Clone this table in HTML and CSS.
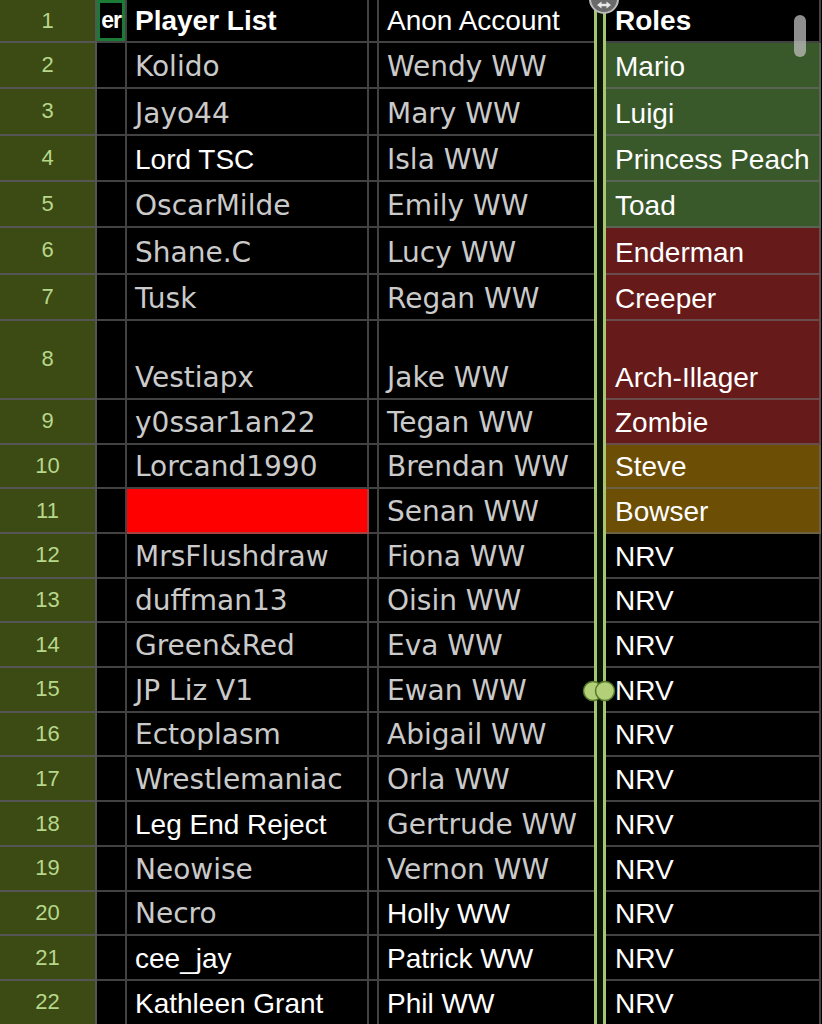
FILE: index.html
```html
<!DOCTYPE html>
<html>
<head>
<meta charset="utf-8">
<link rel="stylesheet" href="styles.css">
</head>
<body>
<div class="sheet">
  <div class="row r1">
    <div class="rh">1</div>
    <div class="c sel"><span>er</span></div>
    <div class="c w bold">Player List</div>
    <div class="c"></div>
    <div class="c w">Anon Account</div>
    <div class="div top"><span></span></div>
    <div class="c w bold">Roles</div>
  </div>
  <div class="row ra"><div class="rh">2</div><div class="c"></div><div class="c v">Kolido</div><div class="c"></div><div class="c v">Wendy WW</div><div class="div"></div><div class="c w g">Mario</div></div>
  <div class="row ra"><div class="rh">3</div><div class="c"></div><div class="c v">Jayo44</div><div class="c"></div><div class="c v">Mary WW</div><div class="div"></div><div class="c w g">Luigi</div></div>
  <div class="row ra"><div class="rh">4</div><div class="c"></div><div class="c w">Lord TSC</div><div class="c"></div><div class="c v">Isla WW</div><div class="div"></div><div class="c w g">Princess Peach</div></div>
  <div class="row ra"><div class="rh">5</div><div class="c"></div><div class="c v">OscarMilde</div><div class="c"></div><div class="c v">Emily WW</div><div class="div"></div><div class="c w g">Toad</div></div>
  <div class="row ra"><div class="rh">6</div><div class="c"></div><div class="c v">Shane.C</div><div class="c"></div><div class="c v">Lucy WW</div><div class="div"></div><div class="c w r">Enderman</div></div>
  <div class="row ra"><div class="rh">7</div><div class="c"></div><div class="c v">Tusk</div><div class="c"></div><div class="c v">Regan WW</div><div class="div"></div><div class="c w r">Creeper</div></div>
  <div class="row rt"><div class="rh">8</div><div class="c"></div><div class="c v">Vestiapx</div><div class="c"></div><div class="c v">Jake WW</div><div class="div"></div><div class="c w r">Arch-Illager</div></div>
  <div class="row rb"><div class="rh">9</div><div class="c"></div><div class="c v">y0ssar1an22</div><div class="c"></div><div class="c v">Tegan WW</div><div class="div"></div><div class="c w r">Zombie</div></div>
  <div class="row rb"><div class="rh">10</div><div class="c"></div><div class="c v">Lorcand1990</div><div class="c"></div><div class="c v">Brendan WW</div><div class="div"></div><div class="c w o">Steve</div></div>
  <div class="row rb"><div class="rh">11</div><div class="c"></div><div class="c red"></div><div class="c"></div><div class="c v">Senan WW</div><div class="div"></div><div class="c w o">Bowser</div></div>
  <div class="row rb"><div class="rh">12</div><div class="c"></div><div class="c v">MrsFlushdraw</div><div class="c"></div><div class="c v">Fiona WW</div><div class="div"></div><div class="c w">NRV</div></div>
  <div class="row rb"><div class="rh">13</div><div class="c"></div><div class="c v">duffman13</div><div class="c"></div><div class="c v">Oisin WW</div><div class="div"></div><div class="c w">NRV</div></div>
  <div class="row rb"><div class="rh">14</div><div class="c"></div><div class="c v">Green&amp;Red</div><div class="c"></div><div class="c v">Eva WW</div><div class="div"></div><div class="c w">NRV</div></div>
  <div class="row rb"><div class="rh">15</div><div class="c"></div><div class="c v">JP Liz V1</div><div class="c"></div><div class="c v">Ewan WW</div><div class="div"></div><div class="c w">NRV</div></div>
  <div class="row rb"><div class="rh">16</div><div class="c"></div><div class="c v">Ectoplasm</div><div class="c"></div><div class="c v">Abigail WW</div><div class="div"></div><div class="c w">NRV</div></div>
  <div class="row rb"><div class="rh">17</div><div class="c"></div><div class="c v">Wrestlemaniac</div><div class="c"></div><div class="c v">Orla WW</div><div class="div"></div><div class="c w">NRV</div></div>
  <div class="row rb"><div class="rh">18</div><div class="c"></div><div class="c w">Leg End Reject</div><div class="c"></div><div class="c v">Gertrude WW</div><div class="div"></div><div class="c w">NRV</div></div>
  <div class="row rb"><div class="rh">19</div><div class="c"></div><div class="c v">Neowise</div><div class="c"></div><div class="c v">Vernon WW</div><div class="div"></div><div class="c w">NRV</div></div>
  <div class="row rb"><div class="rh">20</div><div class="c"></div><div class="c v">Necro</div><div class="c"></div><div class="c w">Holly WW</div><div class="div"></div><div class="c w">NRV</div></div>
  <div class="row rb"><div class="rh">21</div><div class="c"></div><div class="c w">cee_jay</div><div class="c"></div><div class="c w">Patrick WW</div><div class="div"></div><div class="c w">NRV</div></div>
  <div class="row rb"><div class="rh">22</div><div class="c"></div><div class="c w">Kathleen Grant</div><div class="c"></div><div class="c w">Phil WW</div><div class="div"></div><div class="c w">NRV</div></div>

  <svg class="handle" width="34" height="18" viewBox="0 0 34 18">
    <circle cx="17" cy="-1" r="14" fill="#6a6a6a" stroke="#bdbdbd" stroke-width="2"/>
    <path d="M10 5 L14.5 1.5 L14.5 8.5 Z" fill="#e8e8e8"/>
    <path d="M24 5 L19.5 1.5 L19.5 8.5 Z" fill="#e8e8e8"/>
    <rect x="14" y="3.8" width="6" height="2.4" fill="#e8e8e8"/>
  </svg>
  <svg class="knobs" width="36" height="24" viewBox="0 0 36 24">
    <circle cx="11" cy="12" r="9.5" fill="#b3d079" stroke="#56782b" stroke-width="1.5"/>
    <circle cx="23" cy="12" r="9.5" fill="#b3d079" stroke="#56782b" stroke-width="1.5"/>
  </svg>
  <div class="thumb"></div>
</div>
</body>
</html>
```

FILE: styles.css
```css
html, body {
  margin: 0;
  padding: 0;
  background: #000;
}

.sheet {
  position: relative;
  width: 822px;
  height: 1024px;
  overflow: hidden;
  background: #000;
  font-family: "Liberation Sans", Arial, sans-serif;
}

.row {
  display: grid;
  grid-template-columns: 97px 30px 242px 10px 215px 12px 215px;
}

.r1 { height: 43px; }
.ra { height: 46.33px; }
.rt { height: 79px; }
.rb { height: 44.7px; }

.rh {
  box-sizing: border-box;
  background: #3c4a14;
  color: #b7d78a;
  font-size: 22px;
  display: flex;
  align-items: center;
  justify-content: center;
  border-right: 2px solid #555;
  border-bottom: 2px solid #555;
}

.c {
  box-sizing: border-box;
  border-right: 2px solid rgba(110, 110, 110, 0.6);
  border-bottom: 2px solid rgba(110, 110, 110, 0.6);
  display: flex;
  align-items: flex-end;
  padding: 0 0 3px 8px;
  font-size: 28px;
  line-height: 34px;
  white-space: nowrap;
  overflow: hidden;
}

.row > .c:nth-child(5) {
  border-right: none;
}

.row > .c:nth-child(7) {
  padding-left: 9px;
}

.v {
  font-family: "DejaVu Sans", Verdana, sans-serif;
  color: #cacaca;
}

.w {
  color: #fff;
}

.bold {
  font-weight: bold;
}

.g { background: #3a592b; }
.r { background: #671a1a; }
.o { background: #6c4e05; }
.red { background: #ff0000; }

.sel {
  padding: 0;
  position: relative;
}

.sel span {
  box-sizing: border-box;
  position: absolute;
  left: 0;
  top: 0;
  width: 28px;
  height: 41px;
  border: 3px solid #1b7a36;
  color: #fff;
  font-weight: bold;
  font-size: 23px;
  letter-spacing: -1px;
  line-height: 34px;
  display: flex;
  justify-content: flex-end;
  padding-right: 1px;
}

.div {
  box-sizing: border-box;
  border-left: 3px solid #a8c56f;
  border-right: 3px solid #a8c56f;
  background: #0c1407;
}

.div.top {
  position: relative;
}

.div.top span {
  position: absolute;
  left: 1px;
  top: 2px;
  width: 2px;
  height: 34px;
  background: #0c1407;
}

.handle {
  position: absolute;
  left: 587px;
  top: 0;
}

.knobs {
  position: absolute;
  left: 582px;
  top: 679px;
}

.thumb {
  position: absolute;
  left: 794px;
  top: 15px;
  width: 12px;
  height: 42px;
  border-radius: 6px;
  background: rgba(190, 190, 190, 0.75);
}
```
